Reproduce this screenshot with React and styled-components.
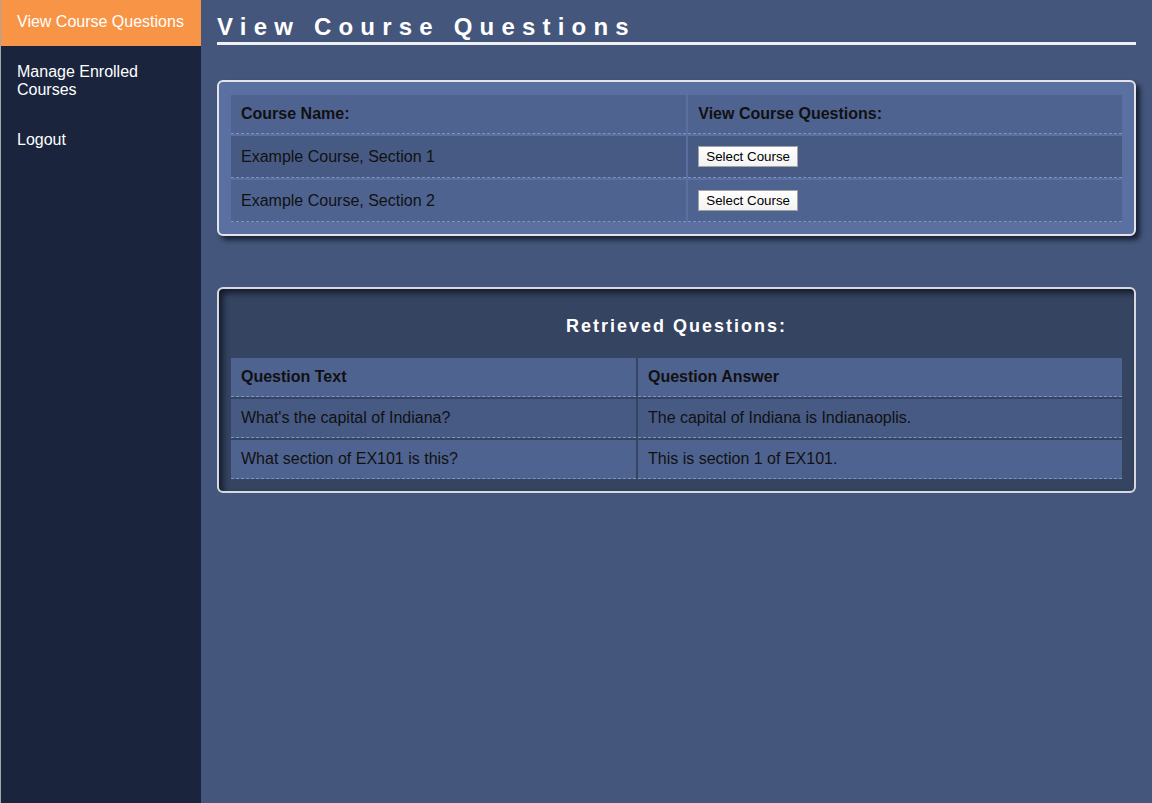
import React from 'react';
import styled, { createGlobalStyle } from 'styled-components';

const courses = ['Example Course, Section 1', 'Example Course, Section 2'];

const questions = [
    { text: "What's the capital of Indiana?", answer: 'The capital of Indiana is Indianaoplis.' },
    { text: 'What section of EX101 is this?', answer: 'This is section 1 of EX101.' },
];

const App = () => {
    return (
        <>
            <GlobalStyle />
            <Layout>
                <Sidebar>
                    <NavList>
                        <NavItem active>View Course Questions</NavItem>
                        <NavItem>Manage Enrolled<br />Courses</NavItem>
                        <NavItem>Logout</NavItem>
                    </NavList>
                </Sidebar>
                <Main>
                    <PageTitle>View Course Questions</PageTitle>

                    <CoursePanel>
                        <Table>
                            <thead>
                                <tr>
                                    <HeadCell>Course Name:</HeadCell>
                                    <HeadCell>View Course Questions:</HeadCell>
                                </tr>
                            </thead>
                            <tbody>
                                {courses.map((name, i) => (
                                    <tr key={name}>
                                        <Cell odd={i % 2 === 0}>{name}</Cell>
                                        <Cell odd={i % 2 === 0}>
                                            <SelectButton type="button">Select Course</SelectButton>
                                        </Cell>
                                    </tr>
                                ))}
                            </tbody>
                        </Table>
                    </CoursePanel>

                    <QuestionPanel>
                        <PanelTitle>Retrieved Questions:</PanelTitle>
                        <Table>
                            <thead>
                                <tr>
                                    <HeadCell>Question Text</HeadCell>
                                    <HeadCell>Question Answer</HeadCell>
                                </tr>
                            </thead>
                            <tbody>
                                {questions.map((q, i) => (
                                    <tr key={q.text}>
                                        <Cell odd={i % 2 === 0}>{q.text}</Cell>
                                        <Cell odd={i % 2 === 0}>{q.answer}</Cell>
                                    </tr>
                                ))}
                            </tbody>
                        </Table>
                    </QuestionPanel>
                </Main>
            </Layout>
        </>
    );
};

const GlobalStyle = createGlobalStyle`
    html, body {
        margin: 0;
        padding: 0;
        height: 100%;
    }
    body {
        font-family: "Liberation Sans", Arial, sans-serif;
        background: #44567c;
    }
    #root {
        min-height: 100%;
    }
`;

const Layout = styled.div`
    display: flex;
    min-height: 100vh;
`;

const Sidebar = styled.nav`
    width: 200px;
    flex-shrink: 0;
    background: #1a243d;
    border-left: 1px solid #a6a6a6;
    overflow: hidden;
`;

const NavList = styled.div`
    display: flex;
    flex-direction: column;
    margin-top: -4px;
`;

const NavItem = styled.a`
    display: block;
    padding: 17px 16px 15px;
    font-size: 16px;
    line-height: 18px;
    color: #fff;
    cursor: pointer;
    background: ${props => props.active ? '#f79446' : 'transparent'};
`;

const Main = styled.main`
    flex: 1;
    padding: 13px 16px 16px;
    color: #fff;
`;

const PageTitle = styled.h1`
    margin: 0 0 35px;
    padding-bottom: 1px;
    font-size: 24px;
    font-weight: bold;
    letter-spacing: 7.2px;
    color: #fff;
    border-bottom: 3px solid #eef0f5;
`;

const Panel = styled.section`
    border: 2px solid #e2e4ea;
    border-radius: 6px;
    padding: 11px 10px 10px;
`;

const CoursePanel = styled(Panel)`
    background: #5a70a1;
    box-shadow: 4px 4px 5px rgba(10, 15, 30, 0.75);
    margin-bottom: 51px;
`;

const QuestionPanel = styled(Panel)`
    padding-top: 9px;
    background: #354461;
    border-color: #d6d9e0;
    box-shadow: inset 4px 4px 6px rgba(5, 10, 20, 0.7);
`;

const PanelTitle = styled.h2`
    margin: 18px 0 19px;
    text-align: center;
    font-size: 18px;
    font-weight: bold;
    letter-spacing: 2px;
    color: #fff;
`;

const Table = styled.table`
    width: 100%;
    border-collapse: separate;
    border-spacing: 2px;
    color: #111;
    font-size: 16px;
`;

const HeadCell = styled.th`
    text-align: left;
    padding: 10px;
    background: #4f6391;
    border-bottom: 1px dashed #7e93c4;
    font-weight: bold;
`;

const Cell = styled.td`
    padding: 10px;
    background: ${props => props.odd ? '#465a84' : '#4f6391'};
    border-bottom: 1px dashed #7e93c4;
`;

const SelectButton = styled.button`
    font-family: "Liberation Sans", Arial, sans-serif;
    font-size: 13.33px;
    line-height: 15px;
    padding: 2px 7px;
    color: #000;
    background: linear-gradient(#ffffff, #f2f2f2);
    border: 1px solid #a3a3a3;
    border-radius: 0;
    cursor: pointer;
`;

export default App;
